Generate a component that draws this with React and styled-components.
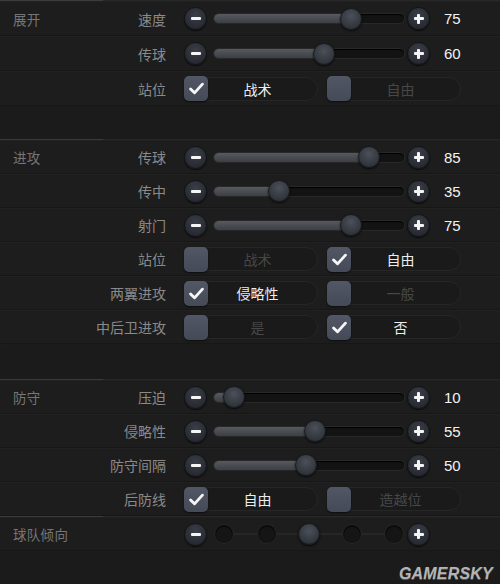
import React from "react";
import styled, { createGlobalStyle } from "styled-components";

const Global = createGlobalStyle`
  html, body { margin: 0; padding: 0; background: #1b1b1b; }
  body { font-family: "Noto Sans CJK SC", "Noto Sans", sans-serif; }
`;

const Page = styled.div`
  width: 500px;
  height: 584px;
  overflow: hidden;
  display: flex;
  flex-direction: column;
  background:
    radial-gradient(ellipse 22px 60px at 4px 290px, rgba(70, 100, 130, 0.22), transparent),
    #1b1b1b;
`;

const Separator = styled.div`
  height: 1px;
  flex: none;
  background: linear-gradient(to right, #3b3b3b 0, #3b3b3b 103px, #282828 103px, #282828 100%);
`;

const Spacer = styled.div`
  height: ${(p) => p.$h}px;
  flex: none;
`;

const Section = styled.div`
  display: flex;
  flex-direction: column;
`;

const Row = styled.div`
  height: ${(p) => p.$h}px;
  display: grid;
  grid-template-columns: 80px 73px 1fr;
  align-items: center;
  padding-left: 13px;
  background: #1d1d1d;
  box-shadow: inset 0 -1px 0 #171717, inset 0 1px 0 #212121;
`;

const SectionLabel = styled.div`
  font-size: 13.5px;
  color: #767676;
  white-space: nowrap;
  letter-spacing: 0.3px;
`;

const RowLabel = styled.div`
  font-size: 14px;
  color: #8a8a8a;
  text-align: right;
  white-space: nowrap;
`;

const Control = styled.div`
  padding-left: 18px;
  display: flex;
  align-items: center;
`;

const RoundBtn = styled.div`
  width: 21px;
  height: 21px;
  border-radius: 50%;
  flex: none;
  background: radial-gradient(circle at 50% 35%, #3a3e47, #262930 75%);
  border: 1px solid #121315;
  box-shadow: 0 1px 1px rgba(0, 0, 0, 0.6);
  position: relative;
  display: flex;
  align-items: center;
  justify-content: center;
  margin-left: ${(p) => p.$ml || 0}px;
`;

const Bar = styled.span`
  position: absolute;
  width: ${(p) => (p.$v ? 3 : 10)}px;
  height: ${(p) => (p.$v ? 10 : 3)}px;
  background: #f4f4f4;
  border-radius: 1px;
`;

const Track = styled.div`
  position: relative;
  width: 190px;
  height: 9px;
  margin-left: 7px;
  border-radius: 5px;
  background: #131313;
  box-shadow: inset 0 1px 1px #000, 0 0 0 1px #282828;
`;

const Fill = styled.div`
  position: absolute;
  left: 0;
  top: 0;
  bottom: 0;
  border-radius: 5px;
  background: linear-gradient(#56595e, #3c3f44);
`;

const Thumb = styled.div`
  position: absolute;
  top: 50%;
  width: 22px;
  height: 22px;
  margin-left: -11px;
  margin-top: -11px;
  border-radius: 50%;
  background: radial-gradient(circle at 50% 35%, #4b5059, #2d3138 80%);
  border: 1px solid #191b1f;
  box-shadow: 0 1px 2px rgba(0, 0, 0, 0.7);
  box-sizing: border-box;
`;

const Value = styled.div`
  margin-left: 14px;
  font-family: "Liberation Sans", Arial, sans-serif;
  font-size: 15px;
  color: #f2f2f2;
`;

const Steps = styled.div`
  position: relative;
  width: 190px;
  height: 22px;
  margin-left: 7px;
  display: flex;
  align-items: center;
  justify-content: space-between;
`;

const StepLine = styled.div`
  position: absolute;
  left: 10px;
  right: 10px;
  top: 10px;
  height: 2px;
  background: #262626;
`;

const Stop = styled.div`
  position: relative;
  width: 20px;
  height: 20px;
  border-radius: 50%;
  box-sizing: border-box;
  background: ${(p) => (p.$active ? "radial-gradient(circle at 50% 35%, #4b5059, #2d3138 80%)" : "#151515")};
  border: 1px solid ${(p) => (p.$active ? "#191b1f" : "#262626")};
  box-shadow: ${(p) => (p.$active ? "0 1px 2px rgba(0,0,0,0.7)" : "inset 0 1px 2px #000")};
  transform: ${(p) => (p.$active ? "scale(1.1)" : "none")};
`;

const Options = styled.div`
  display: flex;
  gap: 9px;
`;

const Option = styled.div`
  width: 134px;
  height: 24px;
  box-sizing: border-box;
  border-radius: 12px;
  border: 1px solid #262626;
  background: #1a1a1a;
  display: flex;
  align-items: center;
`;

const Box = styled.div`
  width: 24px;
  height: 25px;
  margin-left: -1px;
  border-radius: 5px;
  flex: none;
  background: linear-gradient(#525766, #454a57);
  box-shadow: 0 1px 2px rgba(0, 0, 0, 0.6);
  display: flex;
  align-items: center;
  justify-content: center;
`;

const OptionText = styled.div`
  flex: 1;
  text-align: center;
  padding-right: 10px;
  font-size: 14px;
  color: ${(p) => (p.$on ? "#ededed" : "#474747")};
`;

const Footer = styled.div`
  flex: 1;
  display: flex;
  align-items: flex-end;
  justify-content: flex-end;
  padding: 0 7px 1px 0;
`;

const Watermark = styled.div`
  font-family: "Liberation Sans", Arial, sans-serif;
  font-weight: bold;
  font-style: italic;
  font-size: 16px;
  letter-spacing: 0.2px;
  color: #b4b4b4;
  text-shadow: 0 1px 0 #555;
`;

const Check = () => (
  <svg width="19" height="19" viewBox="0 0 24 24">
    <path d="M4.5 12.5 L9.5 17.5 L19.5 6.5" fill="none" stroke="#f6f6f6" strokeWidth="3.6" strokeLinecap="round" strokeLinejoin="round" />
  </svg>
);

const Minus = () => (
  <RoundBtn>
    <Bar />
  </RoundBtn>
);

const Plus = ({ ml }) => (
  <RoundBtn $ml={ml}>
    <Bar />
    <Bar $v />
  </RoundBtn>
);

const Slider = ({ value }) => {
  const x = 2 + value * 1.8;
  return (
    <Control>
      <Minus />
      <Track>
        <Fill style={{ width: x }} />
        <Thumb style={{ left: x }} />
      </Track>
      <Plus ml={3} />
      <Value>{value}</Value>
    </Control>
  );
};

const StepSlider = ({ value }) => (
  <Control>
    <Minus />
    <Steps>
      <StepLine />
      {[0, 1, 2, 3, 4].map((i) => (
        <Stop key={i} $active={i === value} />
      ))}
    </Steps>
    <Plus ml={3} />
  </Control>
);

const Choice = ({ options, selected }) => (
  <Control>
    <Options>
      {options.map((o, i) => (
        <Option key={o}>
          <Box>{i === selected && <Check />}</Box>
          <OptionText $on={i === selected}>{o}</OptionText>
        </Option>
      ))}
    </Options>
  </Control>
);

const renderControl = (r) => {
  if (r.type === "slider") return <Slider value={r.value} />;
  if (r.type === "steps") return <StepSlider value={r.value} />;
  return <Choice options={r.options} selected={r.selected} />;
};

const sections = [
  {
    label: "展开",
    h: 35,
    rows: [
      { label: "速度", type: "slider", value: 75 },
      { label: "传球", type: "slider", value: 60 },
      { label: "站位", type: "choice", options: ["战术", "自由"], selected: 0 },
    ],
  },
  {
    label: "进攻",
    h: 34,
    rows: [
      { label: "传球", type: "slider", value: 85 },
      { label: "传中", type: "slider", value: 35 },
      { label: "射门", type: "slider", value: 75 },
      { label: "站位", type: "choice", options: ["战术", "自由"], selected: 1 },
      { label: "两翼进攻", type: "choice", options: ["侵略性", "一般"], selected: 0 },
      { label: "中后卫进攻", type: "choice", options: ["是", "否"], selected: 1 },
    ],
  },
  {
    label: "防守",
    h: 34,
    rows: [
      { label: "压迫", type: "slider", value: 10 },
      { label: "侵略性", type: "slider", value: 55 },
      { label: "防守间隔", type: "slider", value: 50 },
      { label: "后防线", type: "choice", options: ["自由", "造越位"], selected: 0 },
    ],
  },
  {
    label: "球队倾向",
    h: 34,
    rows: [{ label: "", type: "steps", value: 2 }],
  },
];

const gaps = [33, 35, 0];

export default function App() {
  return (
    <>
      <Global />
      <Page>
        {sections.map((s, si) => (
          <React.Fragment key={s.label}>
            <Separator />
            <Section>
              {s.rows.map((r, ri) => (
                <Row key={ri} $h={s.h}>
                  <SectionLabel>{ri === 0 ? s.label : ""}</SectionLabel>
                  <RowLabel>{r.label}</RowLabel>
                  {renderControl(r)}
                </Row>
              ))}
            </Section>
            {si < gaps.length && gaps[si] > 0 && <Spacer $h={gaps[si]} />}
          </React.Fragment>
        ))}
        <Footer>
          <Watermark>GAMERSKY</Watermark>
        </Footer>
      </Page>
    </>
  );
}
